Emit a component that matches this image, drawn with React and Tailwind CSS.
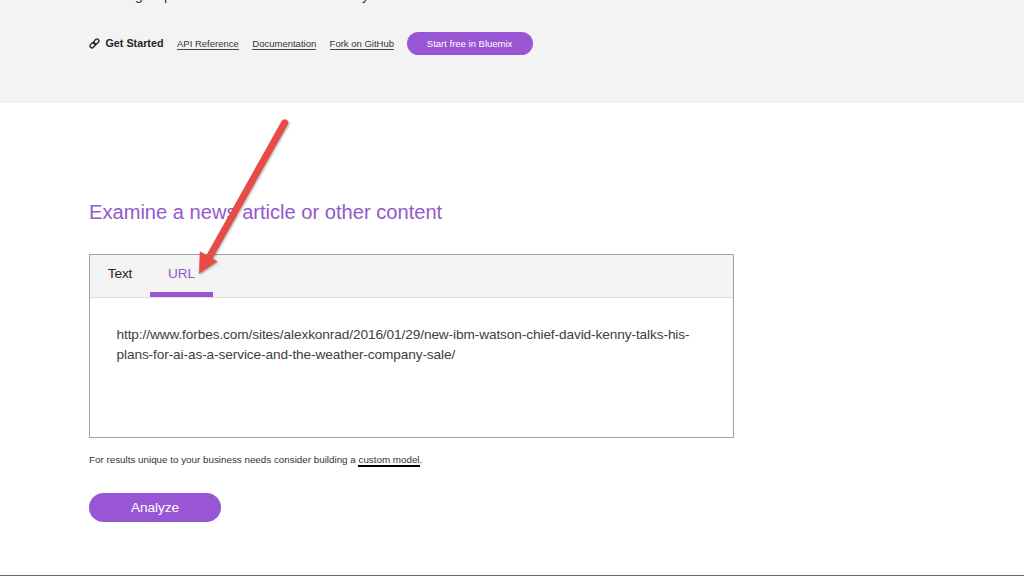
const links = [
  { label: 'API Reference', width: 'w-[62px]' },
  { label: 'Documentation', width: 'w-[64px]' },
  { label: 'Fork on GitHub', width: 'w-[64px]' },
];

function LinkIcon() {
  return (
    <svg className="h-[11px] w-[11px] shrink-0" viewBox="0 0 11 11" fill="none" stroke="#252525" strokeWidth="1.3">
      <rect x="-3" y="-1.9" width="6" height="3.8" rx="1.9" transform="translate(7.2 3.7) rotate(-45)" />
      <rect x="-3" y="-1.9" width="6" height="3.8" rx="1.9" transform="translate(3.7 7.2) rotate(-45)" />
    </svg>
  );
}

function Arrow() {
  return (
    <svg className="pointer-events-none absolute left-[180px] top-[110px] h-[180px] w-[120px] drop-shadow-[1px_1px_1px_rgba(0,0,0,0.3)]" viewBox="0 0 120 180">
      <path d="M104.7 12.8 29.4 147" stroke="#e64c45" strokeWidth="7" strokeLinecap="round" />
      <path d="M19.2 163.5 20.2 141.8 37 151.4Z" fill="#e64c45" stroke="#e64c45" strokeWidth="0.6" strokeLinejoin="round" />
    </svg>
  );
}

export default function App() {
  return (
    <div className="relative flex h-[576px] w-[1024px] flex-col overflow-hidden border-b border-[#686868] bg-white font-['Liberation_Sans',Arial,sans-serif] text-[#333]">
      <header className="flex h-[102.5px] shrink-0 flex-col bg-[#f3f3f3] pl-[89px]">
        <div className="flex h-[32px] text-[14px] leading-[20px]">
          <div className="-mt-[15px] flex pl-[46px]">
            <span className="w-[29px]">g</span>
            <span className="w-[198px]">p</span>
            <span>y</span>
          </div>
        </div>
        <nav className="flex h-[23px] items-center whitespace-nowrap text-[9.5px]">
          <LinkIcon />
          <strong className="-mt-px ml-[5.5px] w-[58px] text-[10.75px] leading-[14px] text-[#252525]">Get Started</strong>
          <div className="ml-[13.5px] flex gap-[13.3px]">
            {links.map((link) => (
              <a key={link.label} className={`${link.width} mt-px border-b border-[#444] leading-[11px]`}>{link.label}</a>
            ))}
          </div>
          <button className="ml-[13px] h-[23px] w-[126px] rounded-full bg-[#9855d4] pt-px leading-[14px] text-white">Start free in Bluemix</button>
        </nav>
      </header>
      <main className="flex flex-col items-start pl-[89px] pt-[96px]">
        <h1 className="text-[20.13px] leading-[26px] text-[#9358ca]">Examine a news article or other content</h1>
        <section className="mt-[29px] flex h-[184px] w-[645px] flex-col border border-[#a2a2a2]">
          <div className="flex h-[43px] shrink-0 items-start border-b border-[#dedede] bg-[#f3f3f3] text-[13.65px] leading-[37px] tracking-[-0.1px]">
            <button className="w-[60px] text-[#252525]">Text</button>
            <button className="h-[42px] w-[63px] border-b-[5px] border-[#9855d4] text-[#9358ca]">URL</button>
          </div>
          <p className="whitespace-nowrap pl-[26.5px] pt-[27px] text-[13.65px] leading-[20px] tracking-[-0.1px] text-[#404040]">
            http://www.forbes.com/sites/alexkonrad/2016/01/29/new-ibm-watson-chief-david-kenny-talks-his-
            <br />
            plans-for-ai-as-a-service-and-the-weather-company-sale/
          </p>
        </section>
        <p className="mt-[15px] whitespace-nowrap text-[9.82px] leading-[14px]">
          For results unique to your business needs consider building a <a className="border-b-2 border-black">custom model</a>.
        </p>
        <button className="mt-[26px] h-[29px] w-[132px] rounded-full bg-[#9855d4] pt-0.5 text-[13.65px] leading-[20px] tracking-[-0.05px] text-white">Analyze</button>
      </main>
      <Arrow />
    </div>
  );
}
